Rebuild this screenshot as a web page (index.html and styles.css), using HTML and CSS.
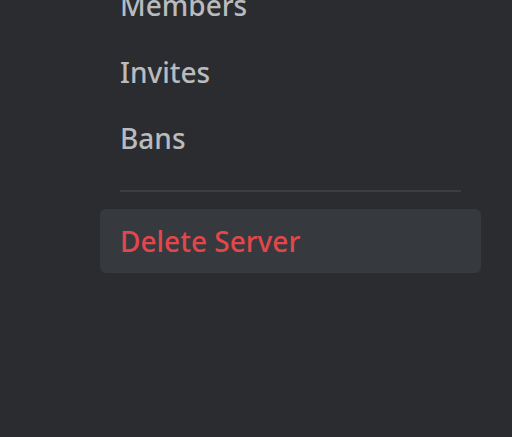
FILE: index.html
```html
<!DOCTYPE html>
<html>
<head>
<meta charset="utf-8">
<link rel="stylesheet" href="styles.css">
</head>
<body>
<nav class="sidebar">
  <div class="item">Members</div>
  <div class="item">Invites</div>
  <div class="item">Bans</div>
  <div class="separator"></div>
  <div class="item danger selected">Delete Server</div>
</nav>
</body>
</html>
```
FILE: styles.css
```css
html, body {
  margin: 0;
  padding: 0;
  background: #2a2c30;
  height: 100%;
  overflow: hidden;
}
.sidebar {
  display: flex;
  flex-direction: column;
  gap: 2.5px;
  width: 381px;
  margin-left: 100px;
  margin-top: -27px;
  font-family: "Noto Sans", "Open Sans", sans-serif;
}
.item {
  height: 64px;
  display: flex;
  align-items: center;
  padding: 0 20px;
  border-radius: 6px;
  font-size: 28px;
  font-weight: 500;
  color: #b9bbbf;
}
.separator {
  height: 2px;
  margin: 17px 20px 15px;
  background: #3a3d42;
}
.item.selected {
  background: #36393d;
}
.item.danger {
  color: #e2474c;
}
```
